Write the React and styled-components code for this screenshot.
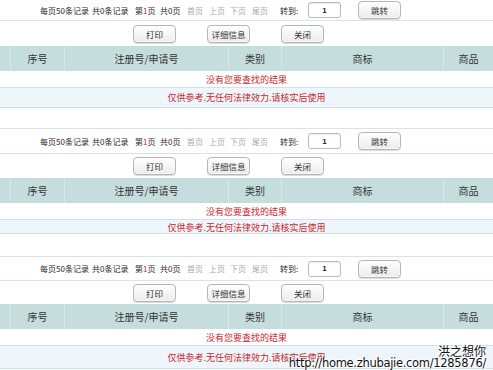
import React from 'react';
import styled, { createGlobalStyle } from 'styled-components';

const GlobalStyle = createGlobalStyle`
  html, body {
    margin: 0;
    padding: 0;
    background: #fff;
    overflow: hidden;
  }
  body {
    font-family: "Noto Sans CJK SC", "Liberation Sans", sans-serif;
    color: #333;
  }
`;

const Page = styled.div`
  position: relative;
  width: 493px;
  height: 370px;
  overflow: hidden;
`;

const Section = styled.div`
  border-top: ${p => (p.$first ? 'none' : '1px solid #d4e5ec')};
`;

const Pager = styled.div`
  display: flex;
  align-items: center;
  height: ${p => p.$h}px;
  padding-left: 40px;
  font-size: 8px;
  color: #333;
  border-bottom: 1px solid #d4e5ec;
`;

const PagerItem = styled.span`
  flex: none;
  width: ${p => p.$w}px;
  overflow: visible;
  color: ${p => (p.$muted ? '#aaa' : '#2a2a2a')};
  white-space: nowrap;
`;

const Red = styled.span`
  color: #d22;
`;

const GoInput = styled.div`
  flex: none;
  width: 31px;
  height: 14px;
  margin-right: 17px;
  border: 1px solid #bbb;
  border-radius: 3px;
  background: #fff;
  box-shadow: inset 0 1px 1px rgba(0, 0, 0, 0.08);
  display: flex;
  align-items: center;
  justify-content: center;
  font-family: "Liberation Sans", sans-serif;
  font-size: 8px;
  font-weight: bold;
  color: #222;
`;

const Button = styled.div`
  flex: none;
  width: 41px;
  height: 16px;
  border: 1px solid #b5b5b5;
  border-radius: 4px;
  background: linear-gradient(#ffffff, #ececec);
  box-shadow: inset -1px -1px 0 #f8f8f8, 0 1px 0 #ddd;
  display: flex;
  align-items: center;
  justify-content: center;
  font-size: 8.5px;
  color: #333;
`;

const ButtonRow = styled.div`
  display: flex;
  align-items: center;
  gap: 31px;
  height: ${p => p.$h}px;
  padding-left: 133px;
`;

const HeaderRow = styled.div`
  display: grid;
  grid-template-columns: 10px 54px 164px 53px 162px 1fr;
  height: 25px;
  background: #c5dedd;
`;

const HeaderCell = styled.div`
  display: flex;
  align-items: center;
  justify-content: center;
  font-size: 10px;
  color: #333;
  border-left: ${p => (p.$noLine ? 'none' : '1px solid #d4e8e8')};
`;

const MessageRow = styled.div`
  height: ${p => p.$h}px;
  background: ${p => (p.$alt ? '#eef6fb' : '#fff')};
  border-bottom: 1px solid #cfe2ec;
  display: flex;
  align-items: ${p => (p.$clip ? 'flex-start' : 'center')};
  justify-content: center;
  width: 100%;
  overflow: hidden;
`;

const MessageText = styled.div`
  width: 454px;
  text-align: center;
  font-size: 9px;
  line-height: ${p => (p.$clip ? '16px' : 'normal')};
  color: #c8262b;
`;

const Spacer = styled.div`
  height: ${p => p.$h}px;
`;

const Watermark = styled.div`
  position: absolute;
  right: 7px;
  bottom: 0;
  display: flex;
  flex-direction: column;
  align-items: flex-end;
  font-family: "DejaVu Sans", "Noto Sans CJK SC", sans-serif;
  color: #111;
  text-shadow: 0 0 2px #fff, 0 0 1px #fff, 1px 1px 0 #fff, -1px -1px 0 #fff;
  line-height: 1;
`;

const WmName = styled.div`
  font-family: "Noto Sans CJK SC", sans-serif;
  font-size: 12px;
  margin-bottom: 1px;
`;

const WmUrl = styled.div`
  font-size: 11.5px;
  letter-spacing: -0.3px;
  margin-bottom: 1px;
`;

const columns = ['', '序号', '注册号/申请号', '类别', '商标', '商品'];

function ResultBlock({ first, pagerH, buttonsH, row2H, row2Clip, spacerH }) {
  return (
    <Section $first={first}>
      <Pager $h={pagerH}>
        <PagerItem $w={52}>每页50条记录</PagerItem>
        <PagerItem $w={43}>共0条记录</PagerItem>
        <PagerItem $w={25}>第<Red>1</Red>页</PagerItem>
        <PagerItem $w={27}>共0页</PagerItem>
        <PagerItem $w={22} $muted>首页</PagerItem>
        <PagerItem $w={21} $muted>上页</PagerItem>
        <PagerItem $w={22} $muted>下页</PagerItem>
        <PagerItem $w={28} $muted>尾页</PagerItem>
        <PagerItem $w={28}>转到:</PagerItem>
        <GoInput>1</GoInput>
        <Button>跳转</Button>
      </Pager>
      <ButtonRow $h={buttonsH}>
        <Button>打印</Button>
        <Button>详细信息</Button>
        <Button>关闭</Button>
      </ButtonRow>
      <HeaderRow>
        {columns.map((c, i) => (
          <HeaderCell key={i} $noLine={i === 0}>{c}</HeaderCell>
        ))}
      </HeaderRow>
      <MessageRow $h={16}>
        <MessageText>没有您要查找的结果</MessageText>
      </MessageRow>
      <MessageRow $h={row2H} $alt $clip={row2Clip}>
        <MessageText $clip={row2Clip}>仅供参考.无任何法律效力.请核实后使用</MessageText>
      </MessageRow>
      <Spacer $h={spacerH} />
    </Section>
  );
}

export default function App() {
  return (
    <>
      <GlobalStyle />
      <Page>
        <ResultBlock first pagerH={20} buttonsH={25} row2H={19} spacerH={20} />
        <ResultBlock pagerH={24} buttonsH={24} row2H={13} row2Clip spacerH={22} />
        <ResultBlock pagerH={23} buttonsH={23} row2H={22} spacerH={10} />
        <Watermark>
          <WmName>洪之想你</WmName>
          <WmUrl>http://home.zhubajie.com/1285876/</WmUrl>
        </Watermark>
      </Page>
    </>
  );
}
